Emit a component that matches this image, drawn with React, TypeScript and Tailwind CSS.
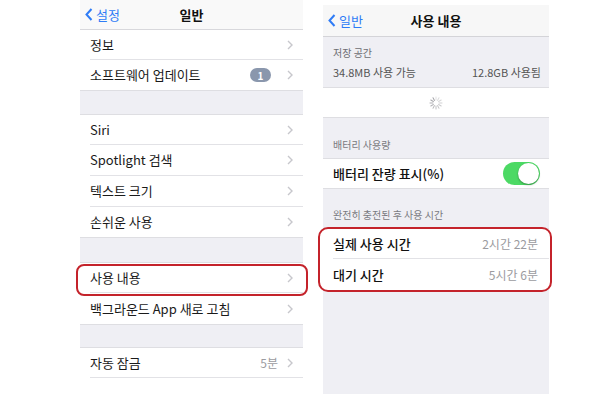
import React from "react";

const font = { fontFamily: '"Noto Sans CJK KR", "Liberation Sans", sans-serif' };

const Chevron = () => (
  <svg width="6" height="10" viewBox="0 0 6 10" className="shrink-0">
    <path d="M1 1l4 4-4 4" fill="none" stroke="#c7c7cc" strokeWidth="1.4" />
  </svg>
);

const BackChevron = () => (
  <svg width="8" height="13" viewBox="0 0 8 13" className="shrink-0">
    <path d="M6.5 1L1.5 6.5l5 5.5" fill="none" stroke="#2f7cf6" strokeWidth="2" />
  </svg>
);

interface RowProps {
  label: string;
  value?: string;
  badge?: string;
  last?: boolean;
  h?: string;
}

const Row = ({ label, value, badge, last, h = "h-[30px]" }: RowProps) => (
  <div className={`${h} bg-white pl-[10px]`}>
    <div
      className={`h-full flex items-center pr-[10px] ${
        last ? "" : "border-b border-[#e2e2e6]"
      }`}
    >
      <span className="flex-1 text-[13px] text-[#1a1a1a]">{label}</span>
      {badge && (
        <span className="mr-[16px] h-[14px] w-[21px] rounded-full bg-[#8a97ad] text-white text-[10px] font-bold flex items-center justify-center">
          {badge}
        </span>
      )}
      {value && <span className="mr-[9px] text-[12px] text-[#9b9ba0]">{value}</span>}
      <Chevron />
    </div>
  </div>
);

const Gap = ({ h }: { h: string }) => (
  <div className={`${h} bg-[#efeff4] border-y border-[#dedee2]`} />
);

const Spinner = () => (
  <svg width="14" height="14" viewBox="-7 -7 14 14">
    {Array.from(Array(12).keys()).map((i) => (
      <line
        key={i}
        x1="0"
        y1="-3"
        x2="0"
        y2="-6"
        stroke="#8e8e93"
        strokeWidth="1"
        strokeLinecap="round"
        opacity={0.25 + (i / 12) * 0.6}
        transform={`rotate(${i * 30})`}
      />
    ))}
  </svg>
);

const LeftScreen = () => (
  <div className="w-[223px] flex flex-col">
    <div className="h-[30px] bg-[#f9f9f9] border-b border-[#d8d8dc] flex items-center relative">
      <div className="absolute left-[5px] top-0 h-full flex items-center gap-[3px]">
        <BackChevron />
        <span className="text-[13px] text-[#2f7cf6]">설정</span>
      </div>
      <span className="flex-1 text-center text-[13px] font-bold text-[#111]">일반</span>
    </div>
    <Row label="정보" />
    <Row label="소프트웨어 업데이트" badge="1" last />
    <Gap h="h-[25px]" />
    <Row label="Siri" />
    <Row label="Spotlight 검색" h="h-[31px]" />
    <Row label="텍스트 크기" h="h-[31px]" />
    <Row label="손쉬운 사용" last />
    <Gap h="h-[26px]" />
    <div className="relative">
      <Row label="사용 내용" />
      <div className="absolute -left-[4px] -right-[5px] top-[1px] -bottom-[3px] border-2 border-[#c4232b] rounded-[8px]" />
    </div>
    <Row label="백그라운드 App 새로 고침" h="h-[31px]" last />
    <Gap h="h-[24px]" />
    <Row label="자동 잠금" value="5분" />
  </div>
);

const SectionHeader = ({ text }: { text: string }) => (
  <div className="px-[10px] pb-[6px] text-[10px] text-[#7a7a80]">{text}</div>
);

const RightScreen = () => (
  <div className="w-[226px] mt-[5px] flex flex-col h-[389px] bg-[#efeff4]">
    <div className="h-[32px] bg-[#f7f7f7] border-b border-[#d4d4d8] flex items-center relative">
      <div className="absolute left-[5px] top-0 h-full flex items-center gap-[3px]">
        <BackChevron />
        <span className="text-[13px] text-[#2f7cf6]">일반</span>
      </div>
      <span className="flex-1 text-center text-[13px] font-bold text-[#111]">사용 내용</span>
    </div>
    <div className="h-[51px] px-[10px] pt-[8px] flex flex-col gap-[4px] border-b border-[#dedee2]">
      <span className="text-[10px] text-[#6d6d72]">저장 공간</span>
      <div className="flex text-[11px] text-[#555]">
        <span className="flex-1">34.8MB 사용 가능</span>
        <span className="mr-[-2px]">12.8GB 사용됨</span>
      </div>
    </div>
    <div className="h-[30px] bg-white flex items-center justify-center border-b border-[#dedee2]">
      <Spinner />
    </div>
    <div className="h-[41px] flex flex-col justify-end border-b border-[#dedee2]">
      <SectionHeader text="배터리 사용량" />
    </div>
    <div className="h-[30px] bg-white flex items-center pl-[10px] pr-[9px] border-b border-[#dedee2]">
      <span className="flex-1 text-[13px] font-medium text-[#111]">배터리 잔량 표시(%)</span>
      <div className="w-[37px] h-[23px] rounded-full bg-[#4cd964] flex items-center justify-end p-[1px]">
        <div className="w-[21px] h-[21px] rounded-full bg-white shadow-[0_1px_2px_rgba(0,0,0,0.35)]" />
      </div>
    </div>
    <div className="h-[40px] flex flex-col justify-end border-b border-[#dedee2]">
      <SectionHeader text="완전히 충전된 후 사용 시간" />
    </div>
    <div className="relative bg-white">
      <div className="h-[30px] pl-[10px]">
        <div className="h-full flex items-center pr-[11px] border-b border-[#e2e2e6]">
          <span className="flex-1 text-[13px] font-medium text-[#111]">실제 사용 시간</span>
          <span className="text-[12px] text-[#9b9ba0]">2시간 22분</span>
        </div>
      </div>
      <div className="h-[31px] flex items-center pl-[10px] pr-[11px]">
        <span className="flex-1 text-[13px] font-medium text-[#111]">대기 시간</span>
        <span className="text-[12px] text-[#9b9ba0]">5시간 6분</span>
      </div>
      <div className="absolute -left-[5px] -right-[3px] -top-[2px] -bottom-[2px] border-2 border-[#c4232b] rounded-[10px]" />
    </div>
  </div>
);

export default function App() {
  return (
    <div className="w-[600px] h-[400px] bg-white flex items-start pl-[80px] gap-[20px]" style={font}>
      <LeftScreen />
      <RightScreen />
    </div>
  );
}
